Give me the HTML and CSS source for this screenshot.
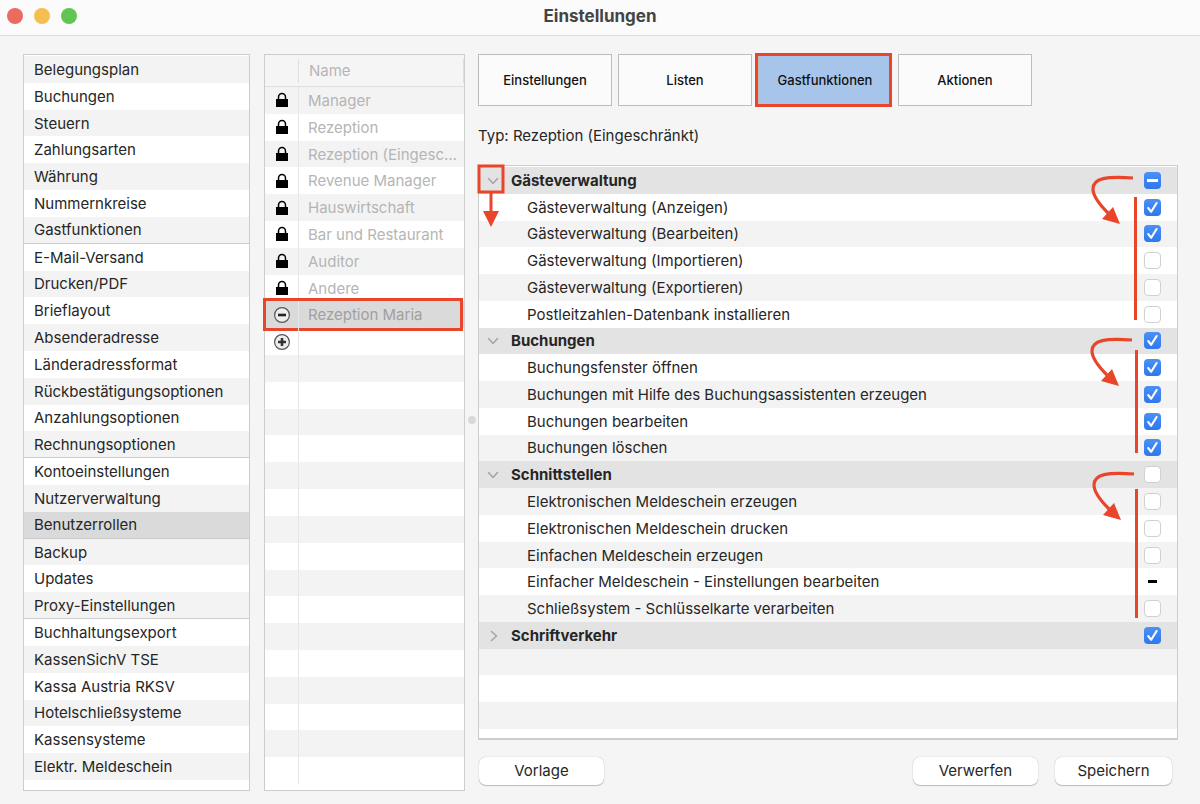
FILE: index.html
```html
<!DOCTYPE html>
<html lang="de">
<head>
<meta charset="utf-8">
<title>Einstellungen</title>
<link rel="stylesheet" href="styles.css">
</head>
<body>
<svg class="defs" aria-hidden="true">
  <symbol id="lock" viewBox="0 0 12 16"><path d="M2.5 7V5.2a3.5 3.7 0 0 1 7 0V7" fill="none" stroke="#000" stroke-width="1.5"/><path d="M0 7h12v8H0z"/></symbol>
  <symbol id="minus" viewBox="0 0 18 18"><circle cx="9" cy="9" r="7.4" fill="#eee" stroke="#555" stroke-width="1.2"/><path d="M5 9h8" stroke="#222" stroke-width="2.6"/></symbol>
  <symbol id="plus" viewBox="0 0 18 18"><circle cx="9" cy="9" r="7.4" fill="#eee" stroke="#555" stroke-width="1.2"/><path d="M5 9h8M9 5v8" stroke="#333" stroke-width="2.6"/></symbol>
  <symbol id="down" viewBox="0 0 12 12"><path d="M1.5 3.5 6 8.5l4.500-5" fill="none" stroke="#a6a6a6" stroke-width="1.6" stroke-linecap="round" stroke-linejoin="round"/></symbol>
  <symbol id="right" viewBox="0 0 12 12"><path d="M4.500 1.500 9.500 6l-5 4.500" fill="none" stroke="#a6a6a6" stroke-width="1.6" stroke-linecap="round" stroke-linejoin="round"/></symbol>
  <symbol id="swoop" viewBox="0 0 48 52"><path d="M43 4C17 2 3 4 3 15c0 7 6 15 15 24" fill="none" stroke="#e8452a" stroke-width="3.2"/><path d="M30 50 12 45 23 33z" fill="#e8452a"/></symbol>
</svg>
<header class="titlebar">
  <div class="lights"><span class="light close"></span><span class="light minimize"></span><span class="light maximize"></span></div>
  <h1 class="title">Einstellungen</h1>
</header>
<main class="layout">
  <nav class="sidebar" aria-label="Einstellungen">
    <a href="#">Belegungsplan</a>
    <a href="#">Buchungen</a>
    <a href="#">Steuern</a>
    <a href="#">Zahlungsarten</a>
    <a href="#">Währung</a>
    <a href="#">Nummernkreise</a>
    <a href="#" class="group-end">Gastfunktionen</a>
    <a href="#">E-Mail-Versand</a>
    <a href="#">Drucken/PDF</a>
    <a href="#">Brieflayout</a>
    <a href="#">Absenderadresse</a>
    <a href="#">Länderadressformat</a>
    <a href="#">Rückbestätigungsoptionen</a>
    <a href="#">Anzahlungsoptionen</a>
    <a href="#" class="group-end">Rechnungsoptionen</a>
    <a href="#">Kontoeinstellungen</a>
    <a href="#">Nutzerverwaltung</a>
    <a href="#" class="group-end current" aria-current="page">Benutzerrollen</a>
    <a href="#">Backup</a>
    <a href="#">Updates</a>
    <a href="#" class="group-end">Proxy-Einstellungen</a>
    <a href="#">Buchhaltungsexport</a>
    <a href="#">KassenSichV TSE</a>
    <a href="#">Kassa Austria RKSV</a>
    <a href="#">Hotelschließsysteme</a>
    <a href="#">Kassensysteme</a>
    <a href="#">Elektr. Meldeschein</a>
  </nav>

  <table class="roles">
    <thead><tr><th></th><th scope="col">Name</th></tr></thead>
    <tbody>
      <tr><td><svg class="lock"><use href="#lock"/></svg></td><td>Manager</td></tr>
      <tr><td><svg class="lock"><use href="#lock"/></svg></td><td>Rezeption</td></tr>
      <tr><td><svg class="lock"><use href="#lock"/></svg></td><td>Rezeption (Eingesc…</td></tr>
      <tr><td><svg class="lock"><use href="#lock"/></svg></td><td>Revenue Manager</td></tr>
      <tr><td><svg class="lock"><use href="#lock"/></svg></td><td>Hauswirtschaft</td></tr>
      <tr><td><svg class="lock"><use href="#lock"/></svg></td><td>Bar und Restaurant</td></tr>
      <tr><td><svg class="lock"><use href="#lock"/></svg></td><td>Auditor</td></tr>
      <tr><td><svg class="lock"><use href="#lock"/></svg></td><td>Andere</td></tr>
      <tr class="selected"><td><button class="round" aria-label="Rolle entfernen"><svg><use href="#minus"/></svg></button></td><td>Rezeption Maria</td></tr>
      <tr><td><button class="round" aria-label="Rolle hinzufügen"><svg><use href="#plus"/></svg></button></td><td></td></tr>
      <tr><td></td><td></td></tr><tr><td></td><td></td></tr>
      <tr><td></td><td></td></tr><tr><td></td><td></td></tr>
      <tr><td></td><td></td></tr><tr><td></td><td></td></tr>
      <tr><td></td><td></td></tr><tr><td></td><td></td></tr>
      <tr><td></td><td></td></tr><tr><td></td><td></td></tr>
      <tr><td></td><td></td></tr><tr><td></td><td></td></tr>
      <tr><td></td><td></td></tr><tr><td></td><td></td></tr>
      <tr><td></td><td></td></tr><tr><td></td><td></td></tr>
    </tbody>
  </table>

  <div class="splitter"><span class="grip"></span></div>

  <section class="detail">
    <div class="tabs">
      <button class="tab">Einstellungen</button>
      <button class="tab">Listen</button>
      <button class="tab active" aria-pressed="true">Gastfunktionen</button>
      <button class="tab">Aktionen</button>
    </div>
    <p class="type">Typ: Rezeption (Eingeschränkt)</p>
    <div class="tree">
      <table class="rights">
        <tbody>
          <tr class="group"><td><button class="toggle" aria-label="Gruppe einklappen" aria-expanded="true"><svg><use href="#down"/></svg></button><label for="c0">Gästeverwaltung</label></td><td><input type="checkbox" id="c0" class="mixed"></td></tr>
          <tr><td><label for="c1">Gästeverwaltung (Anzeigen)</label></td><td><input type="checkbox" id="c1" checked></td></tr>
          <tr><td><label for="c2">Gästeverwaltung (Bearbeiten)</label></td><td><input type="checkbox" id="c2" checked></td></tr>
          <tr><td><label for="c3">Gästeverwaltung (Importieren)</label></td><td><input type="checkbox" id="c3"></td></tr>
          <tr><td><label for="c4">Gästeverwaltung (Exportieren)</label></td><td><input type="checkbox" id="c4"></td></tr>
          <tr><td><label for="c5">Postleitzahlen-Datenbank installieren</label></td><td><input type="checkbox" id="c5"></td></tr>
          <tr class="group"><td><button class="toggle" aria-label="Gruppe einklappen" aria-expanded="true"><svg><use href="#down"/></svg></button><label for="c6">Buchungen</label></td><td><input type="checkbox" id="c6" checked></td></tr>
          <tr><td><label for="c7">Buchungsfenster öffnen</label></td><td><input type="checkbox" id="c7" checked></td></tr>
          <tr><td><label for="c8">Buchungen mit Hilfe des Buchungsassistenten erzeugen</label></td><td><input type="checkbox" id="c8" checked></td></tr>
          <tr><td><label for="c9">Buchungen bearbeiten</label></td><td><input type="checkbox" id="c9" checked></td></tr>
          <tr><td><label for="c10">Buchungen löschen</label></td><td><input type="checkbox" id="c10" checked></td></tr>
          <tr class="group"><td><button class="toggle" aria-label="Gruppe einklappen" aria-expanded="true"><svg><use href="#down"/></svg></button><label for="c11">Schnittstellen</label></td><td><input type="checkbox" id="c11"></td></tr>
          <tr><td><label for="c12">Elektronischen Meldeschein erzeugen</label></td><td><input type="checkbox" id="c12"></td></tr>
          <tr><td><label for="c13">Elektronischen Meldeschein drucken</label></td><td><input type="checkbox" id="c13"></td></tr>
          <tr><td><label for="c14">Einfachen Meldeschein erzeugen</label></td><td><input type="checkbox" id="c14"></td></tr>
          <tr><td>Einfacher Meldeschein - Einstellungen bearbeiten</td><td><span class="dash"></span></td></tr>
          <tr><td><label for="c16">Schließsystem - Schlüsselkarte verarbeiten</label></td><td><input type="checkbox" id="c16"></td></tr>
          <tr class="group"><td><button class="toggle" aria-label="Gruppe ausklappen" aria-expanded="false"><svg><use href="#right"/></svg></button><label for="c17">Schriftverkehr</label></td><td><input type="checkbox" id="c17" checked></td></tr>
          <tr><td></td><td></td></tr>
          <tr><td></td><td></td></tr>
          <tr><td></td><td></td></tr>
        </tbody>
      </table>
      <svg class="marks marks-left" aria-hidden="true">
        <path d="M1 1h24v26H1z" fill="none" stroke="#e8452a" stroke-width="3"/>
        <path d="M13 27v20" stroke="#e8452a" stroke-width="3"/>
        <path d="M5 46h16l-8 16z" fill="#e8452a"/>
      </svg>
      <svg class="marks marks-right" aria-hidden="true">
        <use href="#swoop" x="12" y="9" width="48" height="52"/>
        <path d="M57.500 32v123" stroke="#e8452a" stroke-width="3"/>
        <use href="#swoop" x="11" y="171" width="48" height="52"/>
        <path d="M58.500 185v103" stroke="#e8452a" stroke-width="3"/>
        <use href="#swoop" x="13" y="305" width="48" height="52"/>
        <path d="M58.500 324v129" stroke="#e8452a" stroke-width="3"/>
      </svg>
    </div>
    <footer class="actions">
      <button class="push wide">Vorlage</button>
      <button class="push wide discard">Verwerfen</button>
      <button class="push">Speichern</button>
    </footer>
  </section>
</main>
</body>
</html>
```
FILE: styles.css
```css
* { box-sizing: border-box; }

body {
  margin: 0;
  min-height: 100vh;
  display: flex;
  flex-direction: column;
  background: #f5f5f5;
  color: #262626;
  font: 15px/18px Inter, "Liberation Sans", sans-serif;
}

button { font: inherit; color: inherit; padding: 0; }
.defs { position: absolute; width: 0; height: 0; }

.titlebar {
  display: grid;
  grid-template-columns: 1fr auto 1fr;
  align-items: center;
  height: 36px;
  padding: 0 7px 4px;
  background: #fbfbfb;
  border-bottom: 1px solid #dcdcdc;
}
.lights { display: flex; gap: 11px; }
.light { width: 16px; height: 16px; border-radius: 50%; }
.close { background: #ec6a5f; }
.minimize { background: #f4bf50; }
.maximize { background: #61c554; }
.title { margin: 0; font-size: 17px; font-weight: 700; color: #444; }

.layout {
  flex: 1;
  display: grid;
  grid-template-columns: 227px 201px minmax(0, 1fr);
  column-gap: 14px;
  padding: 18px 22px 13px 23px;
  position: relative;
}

.sidebar {
  display: grid;
  grid-auto-rows: 1fr;
  padding: 1px 0 10px;
  border: 1px solid #cdcdcd;
  background: #fff;
}
.sidebar a {
  display: flex;
  align-items: center;
  padding: 1px 10px 0;
  color: inherit;
  text-decoration: none;
}
.sidebar a:nth-child(odd) { background: #f3f3f3; }
.sidebar a.group-end { border-bottom: 1px solid #cdcdcd; }
.sidebar a.current { background: #dadada; }

.roles {
  display: flex;
  flex-direction: column;
  border: 1px solid #cdcdcd;
  background: #fff;
  color: #b5b5b5;
}
.roles tr {
  position: relative;
  display: grid;
  grid-template-columns: 34px minmax(0, 1fr);
}
.roles thead { display: block; background: #f5f5f5; border-bottom: 1px solid #dfdfdf; }
.roles thead tr { height: 31px; padding: 4px 0 3px; }
.roles th {
  display: flex;
  align-items: center;
  padding: 0 10px;
  border-right: 1px solid #dfdfdf;
  font-weight: 400;
}
.roles tbody {
  flex: 1;
  display: grid;
  grid-auto-rows: 1fr;
  padding-bottom: 6px;
}
.roles tbody tr:nth-child(odd) { background: #f3f3f3; }
.roles td {
  padding: 1px 6px 0 9px;
  white-space: nowrap;
  align-content: center;
}
.roles td:first-child {
  display: flex;
  align-items: center;
  justify-content: center;
  padding: 0;
  border-right: 1px solid #e6e6e6;
}
.roles tbody tr.selected { background: #dadada; color: #a0a0a0; }
.selected::after {
  content: "";
  position: absolute;
  inset: -3px 1px -3px -2px;
  border: 3px solid #e8452a;
}
.lock { width: 12px; height: 16px; }
.round { width: 18px; height: 18px; border: 0; background: none; }
.round svg { display: block; width: 18px; height: 18px; }

.splitter {
  position: absolute;
  top: 0;
  bottom: 0;
  left: 465px;
  width: 13px;
  display: flex;
  align-items: center;
  justify-content: center;
}
.grip { width: 8px; height: 8px; border-radius: 50%; background: #d9d9d9; }

.detail {
  display: flex;
  flex-direction: column;
  margin-left: -1px;
  padding-bottom: 6px;
}
.tabs { display: flex; gap: 6px; }
.tab {
  position: relative;
  width: 134px;
  height: 52px;
  border: 1px solid #bdbdbd;
  background: #fbfbfb;
  color: #111;
  font-size: 13px;
  font-weight: 500;
}
.tab.active { background: #a7c4ea; }
.tab.active::after {
  content: "";
  position: absolute;
  inset: -2px -1px -2px -4px;
  border: 3px solid #e8452a;
}
.type { margin: 21px 0 20px; }

.tree {
  position: relative;
  flex: 1;
  display: flex;
  padding: 1px 0 9px;
  border: 1px solid #cdcdcd;
  border-bottom-width: 2px;
  background: #fff;
}
.rights { flex: 1; display: flex; }
.rights tbody { flex: 1; display: grid; grid-auto-rows: 1fr; }
.rights tr {
  display: grid;
  grid-template-columns: minmax(0, 1fr) 50px;
}
.rights tr:nth-child(odd) { background: #f3f3f3; }
.rights tr.group { background: #e3e3e3; font-weight: 700; }
.rights td { display: flex; align-items: center; padding: 1px 0 0 48px; }
.rights td:last-child { justify-content: center; padding: 0; }
.rights .group td:first-child { padding-left: 8px; }
.toggle { width: 12px; height: 12px; margin-right: 12px; border: 0; background: none; }
.toggle svg { display: block; width: 12px; height: 12px; }

input[type="checkbox"] {
  appearance: none;
  width: 17px;
  height: 17px;
  margin: 0;
  border: 1px solid #d0d0d0;
  border-radius: 4px;
  background: #fff;
}
input[type="checkbox"]:checked,
input[type="checkbox"].mixed {
  border: 0;
  background: linear-gradient(#4a90f7, #2f78ee);
}
input[type="checkbox"]:checked {
  background: url("data:image/svg+xml,%3Csvg xmlns='http://www.w3.org/2000/svg' viewBox='0 0 17 17'%3E%3Cpath d='M4.200 9l3 3.800L12.600 4' fill='none' stroke='%23fff' stroke-width='2.100' stroke-linecap='round' stroke-linejoin='round'/%3E%3C/svg%3E"), linear-gradient(#4a90f7, #2f78ee);
}
input[type="checkbox"].mixed {
  background: linear-gradient(#fff, #fff) center / 11px 3px no-repeat, linear-gradient(#4a90f7, #2f78ee);
}
.dash { width: 9px; height: 3px; background: #000; }

.marks { position: absolute; top: -1px; pointer-events: none; overflow: visible; }
.marks-left { left: -1px; width: 30px; height: 64px; }
.marks-right { right: -1px; width: 100px; height: 460px; }

.actions { display: flex; gap: 17px; padding: 17px 6px 0 1px; }
.push {
  width: 117px;
  height: 28px;
  border: 0;
  border-radius: 7px;
  background: #fff;
  box-shadow: 0 0 1px #0005, 0 1px 1px #0003;
}
.push.wide { width: 125px; }
.discard { margin-left: auto; }
```
